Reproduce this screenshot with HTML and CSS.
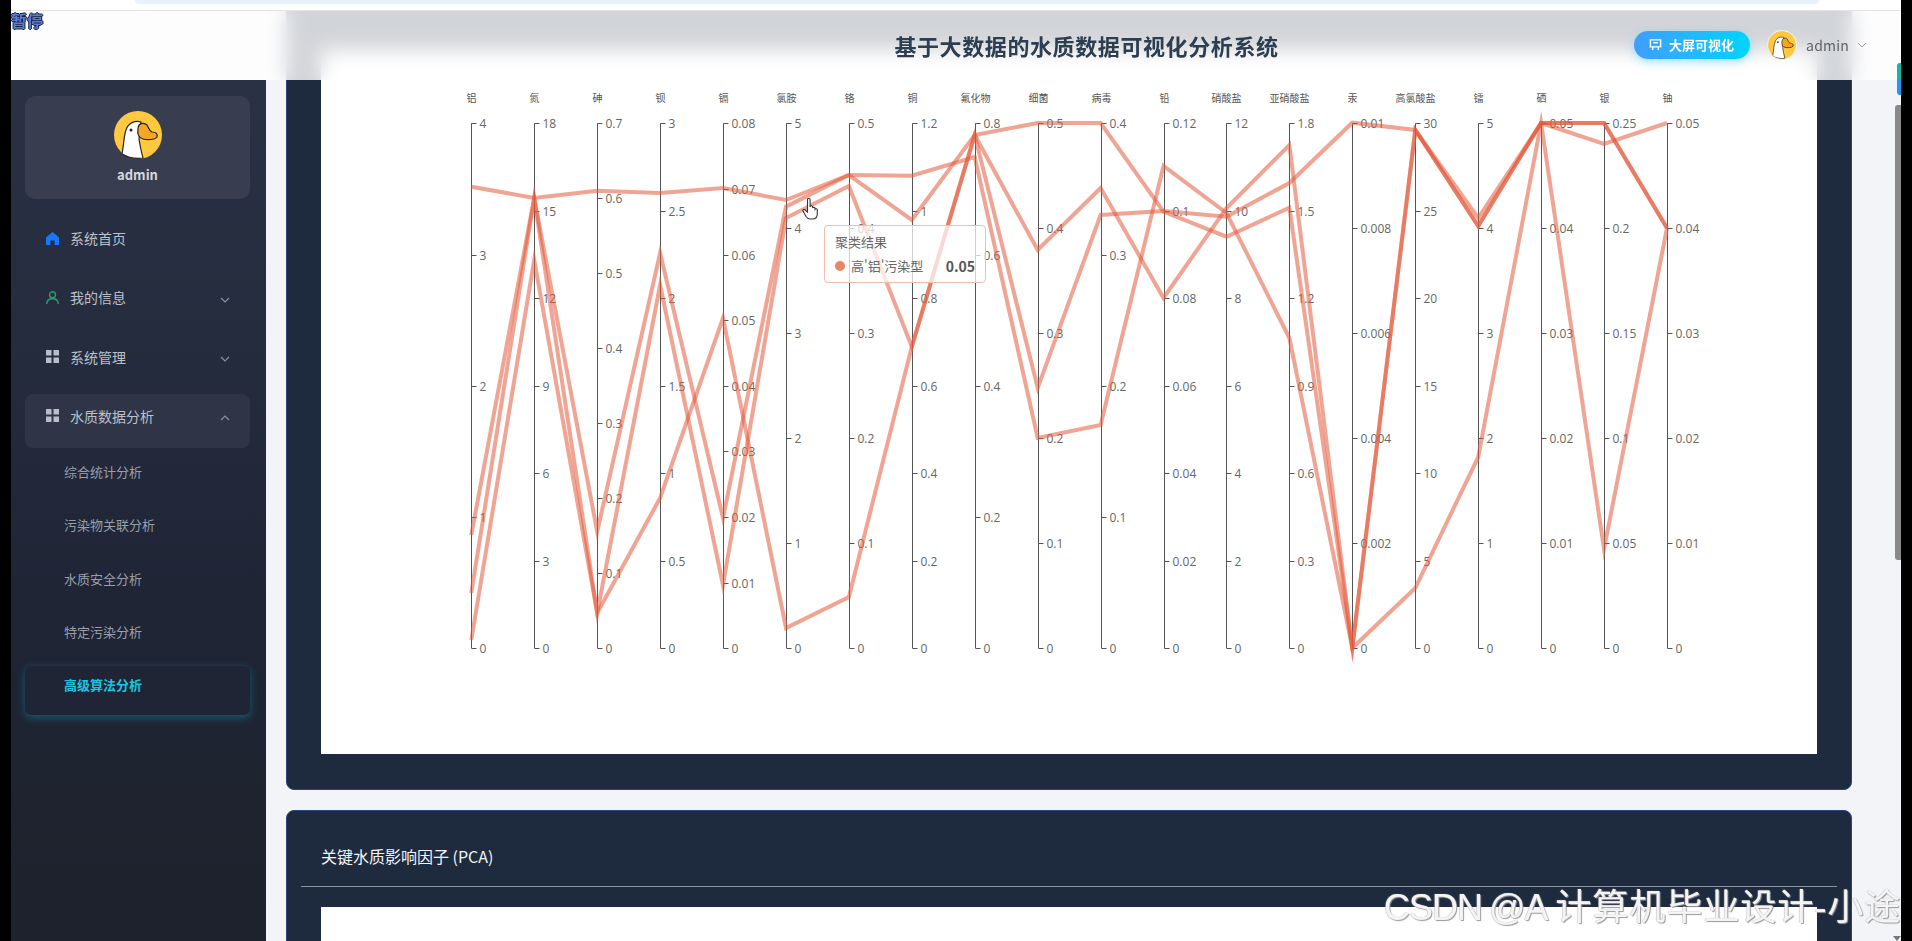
FILE: index.html
```html
<!DOCTYPE html>
<html lang="zh-CN">
<head>
    <meta charset="UTF-8">
    <meta name="viewport" content="width=device-width, initial-scale=1.0">
    <title>基于大数据的水质数据可视化分析系统</title>
    <link rel="stylesheet" href="styles.css">
</head>
<body>
    <svg class="defs" width="0" height="0">
        <symbol id="goose" viewBox="0 0 48 48">
            <circle cx="24" cy="24" r="24" fill="#ffc93f"/>
            <path d="M8 43C10 32 10 24 12 19C14 12 21 9 27 11L25 28C26 34 27 40 29 47C21 48 13 46 8 43Z" fill="#fff" stroke="#222" stroke-width="1.2"/>
            <path d="M24 18C24 12 30 11 33 14C35 17 35 20 38 21C42 21 44 23 43 26C41 29 33 29 29 28C25 27 23 23 24 18Z" fill="#f5a623" stroke="#222" stroke-width="1.2"/>
            <circle cx="17" cy="19" r="1.5" fill="#222"/>
        </symbol>
        <symbol id="grid" viewBox="0 0 13 13">
            <rect width="5.5" height="5.5" x="0" y="0"/>
            <rect width="5.5" height="5.5" x="7.5" y="0"/>
            <rect width="5.5" height="5.5" x="0" y="7.5"/>
            <rect width="5.5" height="5.5" x="7.5" y="7.5"/>
        </symbol>
    </svg>

    <div class="app">
        <div class="top-strip"><div class="address-pill"></div></div>

        <div class="layout">
            <aside class="sidebar">
                <div class="user-card">
                    <svg class="user-avatar"><use href="#goose"/></svg>
                    <div class="user-name">admin</div>
                </div>
                <nav class="menu">
                    <div class="menu-item">
                        <svg class="menu-icon" viewBox="0 0 13 13" fill="#1677ff"><path d="M6.5 0L13 5.6V13H8.6V8.4H4.4V13H0V5.6Z"/></svg>
                        <span>系统首页</span>
                    </div>
                    <div class="menu-item">
                        <svg class="menu-icon" viewBox="0 0 13 13" fill="none" stroke="#2f9e62" stroke-width="1.4"><circle cx="6.5" cy="3.8" r="3"/><path d="M.8 13C.8 9.6 3.2 7.8 6.5 7.8S12.2 9.6 12.2 13"/></svg>
                        <span>我的信息</span>
                        <svg class="chevron" viewBox="0 0 10 6"><path d="M1 1L5 5L9 1"/></svg>
                    </div>
                    <div class="menu-item">
                        <svg class="menu-icon grid-icon"><use href="#grid"/></svg>
                        <span>系统管理</span>
                        <svg class="chevron" viewBox="0 0 10 6"><path d="M1 1L5 5L9 1"/></svg>
                    </div>
                    <div class="menu-item open">
                        <svg class="menu-icon grid-icon"><use href="#grid"/></svg>
                        <span>水质数据分析</span>
                        <svg class="chevron" viewBox="0 0 10 6"><path d="M1 5L5 1L9 5"/></svg>
                    </div>
                    <div class="submenu">
                        <div class="sub-item">综合统计分析</div>
                        <div class="sub-item">污染物关联分析</div>
                        <div class="sub-item">水质安全分析</div>
                        <div class="sub-item">特定污染分析</div>
                        <div class="sub-item active">高级算法分析</div>
                    </div>
                </nav>
            </aside>

            <main class="main">
                <section class="card first">
                    <div class="chart-box">
                        <svg id="chart" class="chart" viewBox="321 50 1496 704"></svg>
                        <div class="tooltip">
                            <div class="tooltip-title">聚类结果</div>
                            <div class="tooltip-row">
                                <i class="tooltip-dot"></i>
                                <span>高'铝'污染型</span>
                                <b>0.05</b>
                            </div>
                        </div>
                        <svg class="hand" viewBox="0 0 17 23"><path d="M5.5 2.5a1.3 1.3 0 0 1 2.6 0V10a1.3 1.3 0 0 1 2.6 0v1a1.3 1.3 0 0 1 2.4.3v1a1.2 1.2 0 0 1 2.2.5V17c0 3-2 5-5 5H8c-2 0-3-1-4-2.5L1 14c-.6-1 .8-2.2 1.8-1.2L5.5 15Z"/></svg>
                    </div>
                </section>

                <section class="card">
                    <div class="card-head">关键水质影响因子 (PCA)</div>
                    <div class="chart-box tall"></div>
                </section>
            </main>
        </div>

        <header class="header">
            <div class="title">基于大数据的水质数据可视化分析系统</div>
            <div class="actions">
                <div class="screen-btn">
                    <svg class="screen-icon" viewBox="0 0 14 14" fill="none" stroke="#fff" stroke-width="1.5"><path d="M1.5 1.5H12.5V9H1.5Z"/><path d="M4.5 4.5H9.5"/><path d="M4 9V12.5M10 9V12.5"/></svg>
                    <span>大屏可视化</span>
                </div>
                <svg class="head-avatar"><use href="#goose"/></svg>
                <span class="head-name">admin</span>
                <svg class="head-chevron" viewBox="0 0 10 6"><path d="M1 1L5 5L9 1"/></svg>
            </div>
        </header>

        <div class="pause">暂停</div>
        <div class="side-tag"></div>
        <div class="scroll-thumb"></div>
        <div class="scroll-arrow"></div>
        <div class="watermark"><span class="wm-latin">CSDN @A</span> <span class="wm-cjk">计算机毕业设计-小途</span></div>
    </div>

    <script src="script.js"></script>
</body>
</html>
```

FILE: styles.css
```css
* {
    box-sizing: border-box;
}
body {
    margin: 0;
    background-color: #000;
    font-family: "Noto Sans CJK SC", "Noto Sans", sans-serif;
    overflow: hidden;
}
.defs {
    position: absolute;
}
.app {
    position: relative;
    margin-left: 11px;
    width: 1890px;
    height: 941px;
    background-color: #f3f4f8;
    overflow: hidden;
}
.top-strip {
    height: 11px;
    background-color: #fff;
    border-bottom: 1px solid #e3e3e3;
}
.address-pill {
    margin-left: 124px;
    width: 1684px;
    height: 4px;
    background-color: #e8f2fa;
    border-radius: 0 0 8px 8px;
}
.layout {
    display: flex;
    height: 930px;
}

/* sidebar */
.sidebar {
    flex: none;
    width: 255px;
    margin-top: 69px;
    padding: 16px 16px 16px 14px;
    background: linear-gradient(180deg, #2a3144 0%, #252c3e 30%, #1f2535 60%, #1e222c 100%);
}
.user-card {
    display: flex;
    flex-direction: column;
    align-items: center;
    height: 103px;
    padding-top: 15px;
    background-color: #383e50;
    border-radius: 10px;
}
.user-avatar {
    width: 48px;
    height: 48px;
}
.user-name {
    margin-top: 6px;
    color: #d5d8de;
    font-size: 13px;
    font-weight: 700;
    line-height: 20px;
}
.menu {
    display: flex;
    flex-direction: column;
    gap: 5.3px;
    margin-top: 17px;
}
.menu-item {
    display: flex;
    align-items: center;
    height: 54px;
    padding: 0 20px 10px 21px;
    color: #bcc1cb;
    font-size: 14px;
    border-radius: 8px;
}
.menu-item.open {
    background-color: #2f3547;
}
.menu-icon {
    flex: none;
    width: 13px;
    height: 13px;
    margin-right: 11px;
}
.grid-icon {
    fill: #b8bdc9;
}
.menu-item span {
    flex: 1;
}
.chevron {
    width: 10px;
    height: 6px;
    margin-top: 5px;
    fill: none;
    stroke: #8a90a0;
    stroke-width: 1.2;
}
.submenu {
    display: flex;
    flex-direction: column;
    gap: 3.3px;
}
.sub-item {
    display: flex;
    align-items: center;
    height: 50px;
    padding: 0 0 13px 39px;
    color: #989eaa;
    font-size: 13px;
    border-radius: 6px;
}
.sub-item.active {
    color: #19c5e0;
    font-weight: 700;
    background-color: #1f2535;
    border-bottom: 1px solid #15505f;
    box-shadow: 0 2px 9px rgba(0, 190, 230, 0.35);
}

/* main area */
.main {
    flex: 1;
    min-width: 0;
    padding: 0 49px 0 20px;
    overflow: hidden;
}
.card {
    margin-top: 20px;
    padding: 0 34px 35px;
    background-color: #1e2a3e;
    border: 1px solid #2a4580;
    border-radius: 8px;
}
.card.first {
    margin-top: -57px;
    padding-top: 95px;
}
.card-head {
    height: 76px;
    margin: 0 -20px 20px;
    padding: 28px 0 0 20px;
    color: #f2f4f7;
    font-size: 16px;
    line-height: 34px;
    border-bottom: 1px solid #8b93a3;
}
.chart-box {
    position: relative;
    height: 704px;
    background-color: #fff;
}
.chart-box.tall {
    height: 400px;
}
.chart {
    display: block;
    width: 1496px;
    height: 704px;
}
.axis-line {
    stroke: #555;
    stroke-width: 1;
}
.axis-name {
    fill: #555;
    font-size: 10px;
    text-anchor: middle;
}
.tick-label {
    fill: #666;
    font-family: "Open Sans", "Noto Sans", sans-serif;
    font-size: 12px;
    dominant-baseline: central;
}
.series {
    fill: none;
    stroke: #e4593a;
    stroke-opacity: 0.55;
    stroke-width: 4;
    stroke-miterlimit: 10;
}
.tooltip {
    position: absolute;
    left: 503px;
    top: 175px;
    width: 162px;
    height: 58px;
    padding: 6px 10px;
    color: #666;
    font-size: 13px;
    line-height: 20px;
    background-color: rgba(255, 255, 255, 0.72);
    border: 1.5px solid #f2bcab;
    border-radius: 4px;
}
.tooltip-row {
    display: flex;
    align-items: center;
    margin-top: 4px;
}
.tooltip-dot {
    width: 10px;
    height: 10px;
    margin-right: 6px;
    background-color: #e98467;
    border-radius: 50%;
}
.tooltip-row b {
    margin-left: auto;
    margin-right: 0;
    font-size: 14px;
    color: #555;
}
.hand {
    position: absolute;
    left: 481px;
    top: 147px;
    width: 17px;
    height: 23px;
    fill: #fff;
    stroke: #333;
    stroke-width: 1.1;
}

/* frosted header over the scrolled content */
.header {
    position: absolute;
    top: 11px;
    left: 0;
    right: 0;
    display: grid;
    grid-template-columns: 1fr auto 1fr;
    align-items: center;
    height: 69px;
    padding: 0 34px 2px 295px;
    background-color: rgba(255, 255, 255, 0.8);
    -webkit-backdrop-filter: blur(10px);
    backdrop-filter: blur(10px);
}
.title {
    grid-column: 2;
    color: #2c3e50;
    font-size: 22px;
    font-weight: 700;
    letter-spacing: 0.6px;
}
.actions {
    grid-column: 3;
    justify-self: end;
    display: flex;
    align-items: center;
}
.screen-btn {
    display: flex;
    align-items: center;
    width: 116px;
    height: 28px;
    padding-left: 15px;
    color: #fff;
    font-size: 13px;
    font-weight: 700;
    background: linear-gradient(90deg, #409eff, #00d4ff);
    border-radius: 14px;
    box-shadow: 0 3px 10px rgba(0, 190, 255, 0.35);
}
.screen-icon {
    width: 13px;
    height: 14px;
    margin-right: 7px;
}
.head-avatar {
    width: 30px;
    height: 30px;
    margin-left: 17px;
    padding: 1px;
    background-color: #eee;
    border-radius: 50%;
}
.head-name {
    margin-left: 9px;
    color: #606266;
    font-size: 14px;
    letter-spacing: 0.2px;
}
.head-chevron {
    width: 10px;
    height: 6px;
    margin-left: 8px;
    fill: none;
    stroke: #a0a4ad;
    stroke-width: 1;
}

/* screen recording leftovers on top of the page */
.pause {
    position: absolute;
    left: 0;
    top: 10px;
    color: #5a7bd8;
    font-size: 16px;
    font-weight: 700;
    line-height: 20px;
    text-shadow: 1px 0 0 #1a2340, -1px 0 0 #1a2340, 0 1px 0 #1a2340, 0 -1px 0 #1a2340;
}
.side-tag {
    position: absolute;
    right: 0;
    top: 63px;
    width: 4px;
    height: 32px;
    background: linear-gradient(180deg, #12b8a0 50%, #2196f3 50%);
    border-radius: 3px 0 0 3px;
}
.scroll-thumb {
    position: absolute;
    right: 0;
    top: 105px;
    width: 6px;
    height: 455px;
    background-color: #8a8a8a;
    border-radius: 3px 0 0 3px;
}
.scroll-arrow {
    position: absolute;
    right: 0;
    bottom: 0;
    border-left: 4px solid transparent;
    border-right: 4px solid transparent;
    border-top: 5px solid #777;
}
.watermark {
    position: absolute;
    left: 1373px;
    top: 885px;
    color: #f4f4f4;
    font-family: "Liberation Sans", "Noto Sans CJK SC", sans-serif;
    font-size: 36px;
    line-height: 46px;
    white-space: nowrap;
    word-spacing: -2px;
    text-shadow: 1px 1px 1px #999, -0.5px 0 1px #bbb;
}
.wm-latin {
    letter-spacing: -1px;
}
.wm-cjk {
    letter-spacing: 1px;
}
```

FILE: script.js
```js
// parallel coordinates chart, same coordinates as the page (viewBox starts at 321,50)
let chart = document.getElementById('chart');
let svgNS = 'http://www.w3.org/2000/svg';
let firstX = 471.3;
let stepX = 62.93;
let topY = 123.3;
let bottomY = 648.3;

let axes = [
    ['铝', 4, 1], ['氮', 18, 3], ['砷', 0.7, 0.1], ['钡', 3, 0.5], ['镉', 0.08, 0.01],
    ['氯胺', 5, 1], ['铬', 0.5, 0.1], ['铜', 1.2, 0.2], ['氟化物', 0.8, 0.2], ['细菌', 0.5, 0.1],
    ['病毒', 0.4, 0.1], ['铅', 0.12, 0.02], ['硝酸盐', 12, 2], ['亚硝酸盐', 1.8, 0.3], ['汞', 0.01, 0.002],
    ['高氯酸盐', 30, 5], ['镭', 5, 1], ['硒', 0.05, 0.01], ['银', 0.25, 0.05], ['铀', 0.05, 0.01]
];

// y position of each line on each axis
let lines = [
    [186.7, 198, 190.7, 193, 188, 200, 175, 175.7, 157, 438, 425, 166, 213, 338, 648, 130, 226, 123, 123, 228],
    [535, 198, 531.7, 253, 518, 206.7, 175, 220, 135, 123, 123, 211.7, 236.7, 207.7, 648, 130, 218, 123, 144, 123],
    [593, 198, 613, 285, 585, 218, 186, 346.7, 135, 250, 188, 298, 208, 145, 648, 588, 457, 123, 549, 228],
    [640, 260, 613, 498, 318, 628, 597, 346.7, 135, 388, 215, 211, 216.7, 183, 122.7, 130, 226, 123, 123, 228]
];

function add(tag, attrs, text) {
    let el = document.createElementNS(svgNS, tag);
    for (let key in attrs) {
        el.setAttribute(key, attrs[key]);
    }
    if (text !== undefined) {
        el.textContent = text;
    }
    chart.appendChild(el);
}

axes.forEach((axis, i) => {
    let x = Math.round(firstX + stepX * i) + 0.5;
    let count = Math.round(axis[1] / axis[2]);
    add('text', { class: 'axis-name', x: x, y: 102 }, axis[0]);
    add('line', { class: 'axis-line', x1: x, y1: topY, x2: x, y2: bottomY });
    for (let t = 0; t <= count; t++) {
        let y = Math.round(bottomY - (bottomY - topY) * (t * axis[2]) / axis[1]) + 0.5;
        add('line', { class: 'axis-line', x1: x, y1: y, x2: x + 5, y2: y });
        add('text', { class: 'tick-label', x: x + 8, y: y }, parseFloat((t * axis[2]).toFixed(3)));
    }
});

lines.forEach(line => {
    let points = line.map((y, i) => (firstX + stepX * i).toFixed(1) + ',' + y).join(' ');
    add('polyline', { class: 'series', points: points });
});
```
